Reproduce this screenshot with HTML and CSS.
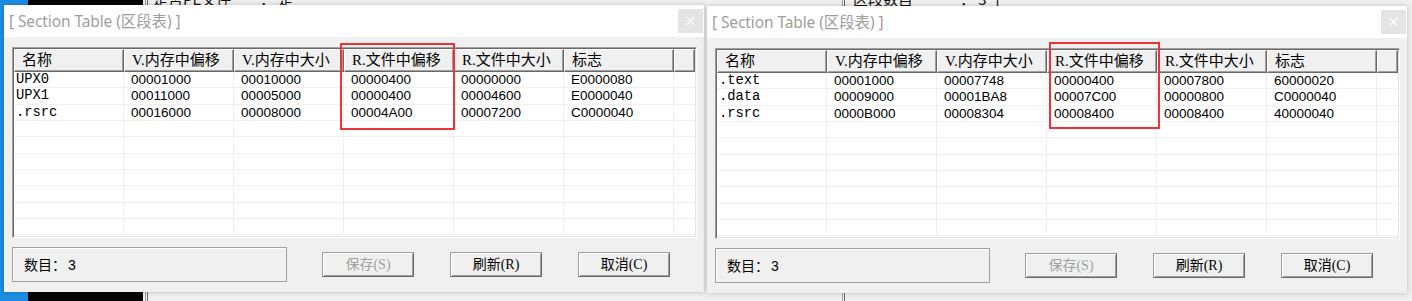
FILE: index.html
```html
<!DOCTYPE html>
<html lang="zh">
<head>
<meta charset="utf-8">
<title>Section Table</title>
<link rel="stylesheet" href="styles.css">
</head>
<body>
<div class="desk">
  <div class="bg-blue"></div>
  <div class="bg-black"></div>
  <div class="bg-rule rule-a"></div>
  <div class="bg-rule rule-b"></div>
  <div class="bg-text txt-a">是否PE文件</div>
  <div class="bg-text txt-b">： 是</div>
  <div class="bg-text txt-c">区段数目</div>
  <div class="bg-text txt-d">： 3 个</div>

  <section class="win win-left">
    <div class="titlebar">
      <span class="title">[ Section Table (区段表) ]</span>
      <span class="close">×</span>
    </div>
    <div class="body">
      <div class="list">
        <div class="lv-head">
          <div class="hc">名称</div>
          <div class="hc">V.内存中偏移</div>
          <div class="hc">V.内存中大小</div>
          <div class="hc">R.文件中偏移</div>
          <div class="hc">R.文件中大小</div>
          <div class="hc">标志</div>
          <div class="hc filler"></div>
        </div>
        <div class="lv-row"><div class="c name">UPX0</div><div class="c">00001000</div><div class="c">00010000</div><div class="c">00000400</div><div class="c">00000000</div><div class="c">E0000080</div><div class="c filler"></div></div>
        <div class="lv-row"><div class="c name">UPX1</div><div class="c">00011000</div><div class="c">00005000</div><div class="c">00000400</div><div class="c">00004600</div><div class="c">E0000040</div><div class="c filler"></div></div>
        <div class="lv-row"><div class="c name">.rsrc</div><div class="c">00016000</div><div class="c">00008000</div><div class="c">00004A00</div><div class="c">00007200</div><div class="c">C0000040</div><div class="c filler"></div></div>
        <div class="lv-row"><div class="c name"></div><div class="c"></div><div class="c"></div><div class="c"></div><div class="c"></div><div class="c"></div><div class="c filler"></div></div>
        <div class="lv-row"><div class="c name"></div><div class="c"></div><div class="c"></div><div class="c"></div><div class="c"></div><div class="c"></div><div class="c filler"></div></div>
        <div class="lv-row"><div class="c name"></div><div class="c"></div><div class="c"></div><div class="c"></div><div class="c"></div><div class="c"></div><div class="c filler"></div></div>
        <div class="lv-row"><div class="c name"></div><div class="c"></div><div class="c"></div><div class="c"></div><div class="c"></div><div class="c"></div><div class="c filler"></div></div>
        <div class="lv-row"><div class="c name"></div><div class="c"></div><div class="c"></div><div class="c"></div><div class="c"></div><div class="c"></div><div class="c filler"></div></div>
        <div class="lv-row"><div class="c name"></div><div class="c"></div><div class="c"></div><div class="c"></div><div class="c"></div><div class="c"></div><div class="c filler"></div></div>
        <div class="lv-row"><div class="c name"></div><div class="c"></div><div class="c"></div><div class="c"></div><div class="c"></div><div class="c"></div><div class="c filler"></div></div>
      </div>
      <div class="foot">
        <div class="status">数目：<span class="num">3</span></div>
        <button class="btn btn-save" disabled>保存(S)</button>
        <button class="btn">刷新(R)</button>
        <button class="btn">取消(C)</button>
      </div>
    </div>
    <div class="mark mark-left"></div>
  </section>

  <section class="win win-right">
    <div class="titlebar">
      <span class="title">[ Section Table (区段表) ]</span>
      <span class="close">×</span>
    </div>
    <div class="body">
      <div class="list">
        <div class="lv-head">
          <div class="hc">名称</div>
          <div class="hc">V.内存中偏移</div>
          <div class="hc">V.内存中大小</div>
          <div class="hc">R.文件中偏移</div>
          <div class="hc">R.文件中大小</div>
          <div class="hc">标志</div>
          <div class="hc filler"></div>
        </div>
        <div class="lv-row"><div class="c name">.text</div><div class="c">00001000</div><div class="c">00007748</div><div class="c">00000400</div><div class="c">00007800</div><div class="c">60000020</div><div class="c filler"></div></div>
        <div class="lv-row"><div class="c name">.data</div><div class="c">00009000</div><div class="c">00001BA8</div><div class="c">00007C00</div><div class="c">00000800</div><div class="c">C0000040</div><div class="c filler"></div></div>
        <div class="lv-row"><div class="c name">.rsrc</div><div class="c">0000B000</div><div class="c">00008304</div><div class="c">00008400</div><div class="c">00008400</div><div class="c">40000040</div><div class="c filler"></div></div>
        <div class="lv-row"><div class="c name"></div><div class="c"></div><div class="c"></div><div class="c"></div><div class="c"></div><div class="c"></div><div class="c filler"></div></div>
        <div class="lv-row"><div class="c name"></div><div class="c"></div><div class="c"></div><div class="c"></div><div class="c"></div><div class="c"></div><div class="c filler"></div></div>
        <div class="lv-row"><div class="c name"></div><div class="c"></div><div class="c"></div><div class="c"></div><div class="c"></div><div class="c"></div><div class="c filler"></div></div>
        <div class="lv-row"><div class="c name"></div><div class="c"></div><div class="c"></div><div class="c"></div><div class="c"></div><div class="c"></div><div class="c filler"></div></div>
        <div class="lv-row"><div class="c name"></div><div class="c"></div><div class="c"></div><div class="c"></div><div class="c"></div><div class="c"></div><div class="c filler"></div></div>
        <div class="lv-row"><div class="c name"></div><div class="c"></div><div class="c"></div><div class="c"></div><div class="c"></div><div class="c"></div><div class="c filler"></div></div>
        <div class="lv-row"><div class="c name"></div><div class="c"></div><div class="c"></div><div class="c"></div><div class="c"></div><div class="c"></div><div class="c filler"></div></div>
      </div>
      <div class="foot">
        <div class="status">数目：<span class="num">3</span></div>
        <button class="btn btn-save" disabled>保存(S)</button>
        <button class="btn">刷新(R)</button>
        <button class="btn">取消(C)</button>
      </div>
    </div>
    <div class="mark mark-right"></div>
  </section>
</div>
</body>
</html>
```

FILE: styles.css
```css
* { box-sizing: border-box; }
html, body { margin: 0; padding: 0; }
body {
  width: 1412px;
  height: 301px;
  overflow: hidden;
  background: #f0f0f0;
  font-family: "Noto Sans CJK SC", sans-serif;
}
.desk {
  position: relative;
  width: 1412px;
  height: 301px;
  background: #f0f0f0;
  overflow: hidden;
}

/* desktop remnants behind the two dialogs */
.bg-blue { position: absolute; left: 0; top: 0; width: 28px; height: 301px; background: #1c8de4; }
.bg-black { position: absolute; left: 28px; top: 0; width: 115px; height: 301px; background: #050505; }
.bg-rule { position: absolute; top: 0; width: 3px; height: 301px; border-left: 1px solid #a0a0a0; border-right: 1px solid #696969; }
.rule-a { left: 145px; }
.rule-b { left: 842px; }
.bg-text {
  position: absolute;
  top: -9px;
  font: 15px/15px "Noto Sans CJK SC", sans-serif;
  color: #111;
}
.txt-a { left: 153px; }
.txt-b { left: 260px; }
.txt-c { left: 853px; }
.txt-d { left: 960px; }

/* dialog window */
.win {
  position: absolute;
  width: 700px;
  height: 287px;
  background: #f0f0f0;
  box-shadow: 0 0 5px rgba(0, 0, 0, 0.22);
  display: flex;
  flex-direction: column;
}
.win-left { left: 4px; top: 5px; }
.win-right { left: 707px; top: 6px; }

.titlebar {
  height: 32px;
  background: #ffffff;
  display: flex;
  align-items: center;
  justify-content: space-between;
  padding: 0 1px 0 5px;
}
.title {
  font: 15.5px/20px "Noto Sans", "Noto Sans CJK SC", sans-serif;
  color: #a29d98;
  letter-spacing: -0.1px;
}
.close {
  width: 25px;
  height: 24px;
  background: #e4e4e4;
  color: #fbfbfb;
  font: 15px/24px "DejaVu Sans", sans-serif;
  text-align: center;
  align-self: flex-start;
  margin-top: 4px;
}

.body {
  flex: 1;
  padding: 10px 8px 10px 8px;
  display: flex;
  flex-direction: column;
}

/* list view */
.list {
  height: 191px;
  width: 685px;
  background: #ffffff;
  border-top: 1px solid #a0a0a0;
  border-left: 1px solid #a0a0a0;
  border-right: 1px solid #ffffff;
  border-bottom: 1px solid #ffffff;
  box-shadow: inset 1px 1px 0 #696969, inset -1px -1px 0 #e3e3e3;
  padding: 1px;
  overflow: hidden;
}
.lv-head {
  display: flex;
  height: 23px;
  background: #f0f0f0;
}
.hc {
  width: 110px;
  flex: none;
  height: 23px;
  border-top: 1px solid #ffffff;
  border-left: 1px solid #ffffff;
  border-right: 1px solid #696969;
  border-bottom: 1px solid #696969;
  box-shadow: inset -1px -1px 0 #a0a0a0;
  padding: 0 0 0 7px;
  font: 15px/20px "Liberation Serif", "Noto Sans CJK SC", serif;
  color: #000;
  white-space: nowrap;
  overflow: hidden;
}
.hc.filler { flex: 1; width: auto; }

.lv-row {
  display: flex;
  height: 16.33px;
  border-bottom: 1px solid #f0f0f0;
}
.c {
  width: 110px;
  flex: none;
  border-right: 1px solid #f0f0f0;
  padding-left: 7px;
  font: 13.5px/16px "Liberation Sans", sans-serif;
  color: #000;
  white-space: nowrap;
  overflow: hidden;
}
.c.name {
  padding-left: 2px;
  font: 13.8px/16px "Liberation Mono", monospace;
}
.c.filler { flex: 1; width: auto; border-right: 0; }

/* footer */
.foot {
  margin-top: 9px;
  display: flex;
  align-items: center;
  height: 35px;
}
.status {
  width: 275px;
  height: 35px;
  border: 1px solid #a0a0a0;
  box-shadow: inset 1px 1px 0 #ffffff;
  padding-left: 11px;
  font: 14px/33px "Noto Sans CJK SC", sans-serif;
  color: #000;
}
.status .num { font-family: "Liberation Sans", sans-serif; margin-left: 2px; }
.btn {
  width: 92px;
  height: 25px;
  margin: 0 0 0 36px;
  padding: 0;
  background: #f0f0f0;
  border-top: 1px solid #a0a0a0;
  border-left: 1px solid #a0a0a0;
  border-right: 1px solid #696969;
  border-bottom: 1px solid #696969;
  box-shadow: inset 1px 1px 0 #ffffff, inset -1px -1px 0 #a0a0a0;
  font: 14px/21px "Liberation Serif", "Noto Sans CJK SC", serif;
  color: #000;
}
.btn-save { margin-left: 35px; color: #a0a0a0; }

/* red highlight boxes */
.mark {
  position: absolute;
  border: 2px solid #ee3338;
  pointer-events: none;
}
.mark-left { left: 336px; top: 38px; width: 115px; height: 87px; }
.mark-right { left: 342px; top: 36px; width: 111px; height: 87px; }
```
